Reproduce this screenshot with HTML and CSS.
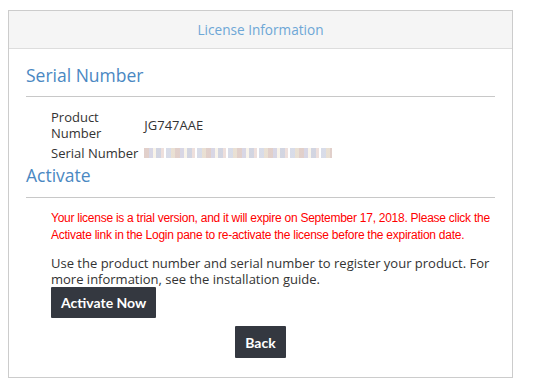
FILE: index.html
```html
<!DOCTYPE html>
<html lang="en">
<head>
    <meta charset="UTF-8">
    <meta name="viewport" content="width=device-width, initial-scale=1.0">
    <title>License Information</title>
    <link rel="stylesheet" href="styles.css">
</head>
<body>
    <div class="panel">
        <div class="panel-heading">License Information</div>
        <div class="panel-body">
            <h2 class="section-title">Serial Number</h2>
            <div class="info-grid">
                <div class="info-label">Product Number</div>
                <div class="info-value">JG747AAE</div>
                <div class="info-label"><span class="nowrap">Serial Number</span></div>
                <div class="info-value"><span class="blurred"></span></div>
            </div>

            <h2 class="section-title activate-title">Activate</h2>
            <div class="section-content">
                <p class="warning">Your license is a trial version, and it will expire on September 17, 2018. Please click the<br>Activate link in the Login pane to re-activate the license before the expiration date.</p>
                <p class="note">Use the product number and serial number to register your product. For more information, see the installation guide.</p>
                <button class="btn">Activate Now</button>
            </div>

            <div class="actions">
                <button class="btn">Back</button>
            </div>
        </div>
    </div>
</body>
</html>
```

FILE: styles.css
```css
body {
    margin: 0;
    padding: 0;
    background: #ffffff;
    font-family: "Open Sans", "Noto Sans", sans-serif;
    color: #333333;
}

.panel {
    margin: 10px 0 0 8px;
    width: 503px;
    height: 366px;
    border: 1px solid #cccccc;
}

.panel-heading {
    height: 37px;
    line-height: 37px;
    background-color: #f5f5f5;
    border-bottom: 1px solid #dddddd;
    text-align: center;
    color: #6ea7d6;
    font-size: 13.6px;
}

.panel-body {
    padding: 13px 17px 0 17px;
}

.section-title {
    margin: 0;
    padding-bottom: 8px;
    border-bottom: 1px solid #c8c8c8;
    color: #4a88c2;
    font-size: 17.5px;
    font-weight: normal;
    line-height: 26px;
}

.activate-title {
    margin-top: 1px;
    padding-bottom: 9px;
}

.info-grid {
    display: grid;
    grid-template-columns: min-content 1fr;
    column-gap: 6px;
    row-gap: 4px;
    margin: 12px 0 0 25px;
    font-size: 13px;
    line-height: 16px;
}

.info-label {
    width: min-content;
}

.info-value {
    display: flex;
    align-items: center;
}

.nowrap {
    white-space: nowrap;
}

.blurred {
    display: inline-block;
    width: 188px;
    height: 10px;
    opacity: 0.55;
    background: repeating-linear-gradient(90deg,
        #c9a9a0 0 5px, #b8b6d0 5px 9px, #f3ead8 9px 12px,
        #aeb3c9 12px 17px, #e0c6c0 17px 20px, #ffffff 20px 22px,
        #b9c0d6 22px 27px, #d8c7b0 27px 31px);
}

.section-content {
    padding: 12px 0 0 25px;
    margin-right: -8px;
}

.warning {
    margin: 0;
    white-space: nowrap;
    font-family: "Liberation Sans", Arial, sans-serif;
    font-size: 12px;
    letter-spacing: -0.26px;
    line-height: 17px;
    color: #ff0000;
}

.note {
    margin: 11px 0 0 0;
    font-size: 13px;
    line-height: 16px;
}

.btn {
    display: inline-block;
    padding: 0 10px;
    height: 31px;
    border: none;
    border-radius: 1px;
    background-color: #343840;
    color: #ffffff;
    font-family: Lato, "Open Sans", sans-serif;
    font-size: 14px;
    font-weight: bold;
    cursor: pointer;
}

.actions {
    display: flex;
    justify-content: center;
    margin-top: 8px;
}

.actions .btn {
    height: 32px;
}
```
